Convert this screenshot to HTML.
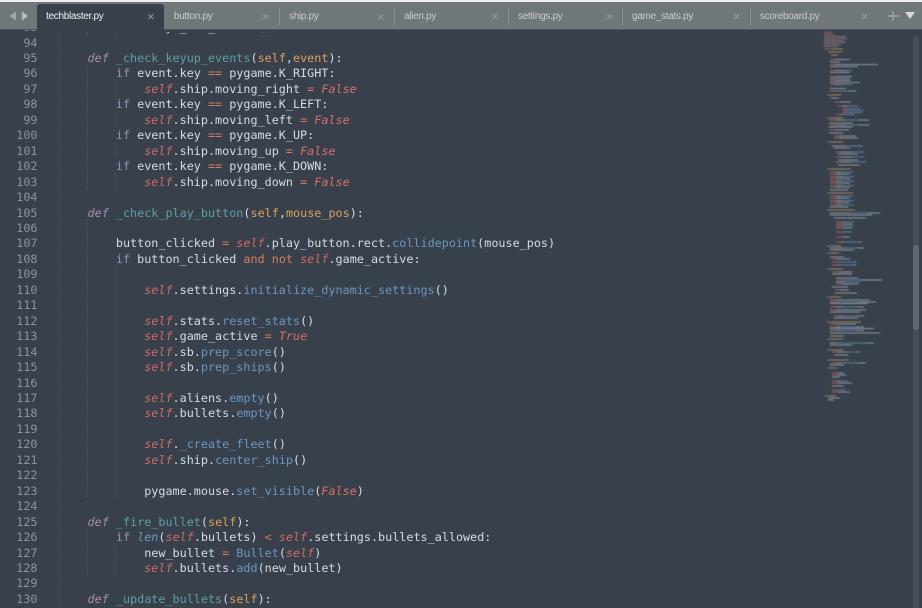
<!DOCTYPE html>
<html>
<head>
<meta charset="utf-8">
<style>
html,body{margin:0;padding:0;background:#38414b}
#app{position:relative;width:922px;height:608px;overflow:hidden;background:#38414b;font-family:"Liberation Mono",monospace}
#topw{position:absolute;left:0;top:0;width:922px;height:2px;background:#f0f0f0;z-index:6}
#bar{position:absolute;left:0;top:2px;width:922px;height:27px;background:#6f7779;z-index:4;border-bottom:1px solid #4b535b;box-sizing:content-box}
#mask{position:absolute;left:40px;top:30px;width:760px;height:1.6px;background:#38414b;z-index:3}
#active{position:absolute;left:37px;top:4px;width:127px;height:27px;background:#38414b;border-radius:3px 3px 0 0;z-index:5}
.t{position:absolute;top:10px;font:10px/14px "Liberation Sans",sans-serif;letter-spacing:-.3px;color:#c9cdd0;z-index:6;white-space:pre}
.x{position:absolute;top:10px;font:13px/14px "Liberation Sans",sans-serif;color:#969c9f;z-index:6}
.s{position:absolute;top:8px;width:1px;height:17px;background:#8b9294;z-index:6}
#gut,#code{position:absolute;top:20.1px;font-size:11.77px;line-height:15.457px;white-space:pre;margin:0}
#gut{left:0;width:37.5px;text-align:right;color:#8c949b}
#code{left:59.2px;color:#d5dbe2}
.k{color:#9a90b8}.d{color:#a98cb5;font-style:italic}.f{color:#5f9ea6}.p{color:#d9a05c}
.e{color:#cf6a66;font-style:italic}.o{color:#d97c5c}.b{color:#6a97bf}.c{color:#6a97bf;font-style:italic}.v{color:#d96f66;font-style:italic}
svg{position:absolute;left:0;top:0}
#track{position:absolute;left:913px;top:35px;width:6px;height:573px;background:#454d58;border-radius:3px 3px 0 0}
#thumb{position:absolute;left:913px;top:245px;width:6px;height:85px;background:#5f6873;border-radius:3px}
</style>
</head>
<body>
<div id="app">
<svg width="922" height="608" fill="none">
<defs><filter id="bl" x="-5%" y="-5%" width="110%" height="110%"><feGaussianBlur stdDeviation=".4"/></filter></defs>
<g stroke="#59616b" stroke-width="1" stroke-dasharray="1 2">
<path d="M59.5 29V608"/>
<path d="M87.5 29V36M87.5 65.8V189.4M87.5 220.3V498.6M87.5 529.5V575.9"/>
<path d="M115.5 29V36M115.5 81.2V96.7M115.5 112.1V127.6M115.5 143V158.5M115.5 173.9V189.4M115.5 266.7V498.6M115.5 545V575.9"/>
</g>
<g stroke-width="1" filter="url(#bl)" opacity=".72">
<path stroke="#aeb5bc" d="M830 59.5h20M830 62h10M830 64.5h48M830 66.5h28M830 70.5h22M830 72.5h20M830 76.5h22M830 78.5h20M830 80.5h20M830 82.5h30M830 84.5h22M830 88.5h16M830 91h26M831 98h8M835 102h16M838 106h20M842 108.5h18M842 110.5h22M842 112.5h20M836 114.5h18M829 120h40M829 123h24M829 125h40M829 127h24M829 130h20M829 133h14M834 136h22M834 138h24M832 146h30M834 148h16M836 152h28M838 154h20M836 157h28M838 160h20M836 162h30M838 165h22M830 172h24M830 174h20M830 176.5h24M830 178.5h20M830 181h24M830 183h20M830 185.5h24M830 187.5h20M830 190h18M830 196h24M830 198h20M830 200.5h24M830 202.5h20M830 205h24M830 207h18M830 213h50M830 215h42M834 218h32M836 222h18M836 224h16M836 226h18M836 228h16M836 232h16M836 237h14M836 242h26M830 248h34M830 250h24M830 257h14M832 259h18M832 262h24M832 265h24M832 272h20M832 274h20M836 278h22M836 280h46M836 282h24M836 284h22M832 287h16M835 290h14M835 293h22M830 300h40M830 302h46M830 303.5h38M830 307h34M830 310h36M830 312h30M834 316h30M834 318h24M830 324h26M830 327h34M830 328.5h44M830 330.5h34M830 333h50M830 336h14M830 343h44M830 345h22M832 352h28M834 355h14M830 363h36M830 365h14M832 373h12M832 375h14M832 377h8M832 381h16M832 383h20M832 386h12M832 390h14M832 392h18M828 398h12M828 400h6"/>
<path stroke="#6a96bf" d="M846 70.5h6M842 84.5h10M836 91h12M848 106h10M846 108.5h14M846 110.5h18M846 112.5h16M842 114.5h10M846 120h12M846 125h12M846 146h14M852 152h12M852 157h12M852 162h14M842 172h12M842 176.5h12M842 181h12M842 185.5h12M842 196h12M842 200.5h12M842 205h12M850 213h18M844 222h10M844 226h10M844 232h8M842 242h18M844 248h14M840 262h14M840 265h14M842 280h16M846 282h14M838 302h20M842 307h16M842 316h16M840 327h16M840 330.5h16M838 343h28M846 352h12M842 363h16M840 381h8M838 390h8"/>
<path stroke="#c96a68" d="M824 32.5h8M824 34.5h10M830 59.5h5M830 64.5h5M830 70.5h5M830 76.5h5M830 80.5h5M830 84.5h5M830 91h5M835 102h5M838 106h5M842 108.5h4M842 110.5h4M842 112.5h4M836 114.5h5M829 120h6M829 125h6M829 130h6M834 136h5M834 138h5M836 152h5M836 157h5M836 162h5M830 172h6M830 174h6M830 176.5h6M830 178.5h6M830 181h6M830 183h6M830 185.5h6M830 187.5h6M830 196h6M830 198h6M830 200.5h6M830 202.5h6M830 205h6M836 222h7M836 224h7M836 226h7M836 228h7M836 232h7M836 237h7M836 242h5M832 259h5M832 262h7M832 265h7M832 272h6M836 280h6M836 284h6M835 290h5M830 300h6M830 302h6M830 307h6M830 310h6M834 316h5M830 324h6M830 327h6M830 330.5h6M832 352h6M830 363h6M832 373h6M832 375h6M832 381h6M832 383h6M832 390h6M832 392h6"/>
<path stroke="#a9828f" d="M824 36.5h22M824 38.5h24M824 40.5h20M824 42.5h22M824 44.5h17M824 46.5h14M824 49h8M827 95h5M827 118h5M827 142h5M827 169h5M827 193h5M827 210h5M827 246h5M827 253h5M827 269h5M827 297h5M827 322h5M827 339h5M827 350h5M827 360h5M827 368h5M824 396h6"/>
<path stroke="#c9a35f" d="M832 49h11M828 52h14M831 55h7M832 95h9M832 118h11M832 142h11M832 169h19M832 193h21M832 210h23M832 246h9M832 253h7M832 269h11M832 297h9M832 322h29M832 339h11M832 350h11M832 360h17M832 368h5M830 396h6"/>
</g>
</svg>
<div id="track"></div>
<div id="thumb"></div>
<pre id="gut">93
94
95
96
97
98
99
100
101
102
103
104
105
106
107
108
109
110
111
112
113
114
115
116
117
118
119
120
121
122
123
124
125
126
127
128
129
130</pre>
<pre id="code">        <span class="e">self</span>.skya_bit_ofscrn()

    <span class="d">def</span> <span class="f">_check_keyup_events</span>(<span class="p">self</span>,<span class="p">event</span>):
        <span class="k">if</span> event.key <span class="o">==</span> pygame.K_RIGHT:
            <span class="e">self</span>.ship.moving_right <span class="o">=</span> <span class="v">False</span>
        <span class="k">if</span> event.key <span class="o">==</span> pygame.K_LEFT:
            <span class="e">self</span>.ship.moving_left <span class="o">=</span> <span class="v">False</span>
        <span class="k">if</span> event.key <span class="o">==</span> pygame.K_UP:
            <span class="e">self</span>.ship.moving_up <span class="o">=</span> <span class="v">False</span>
        <span class="k">if</span> event.key <span class="o">==</span> pygame.K_DOWN:
            <span class="e">self</span>.ship.moving_down <span class="o">=</span> <span class="v">False</span>

    <span class="d">def</span> <span class="f">_check_play_button</span>(<span class="p">self</span>,<span class="p">mouse_pos</span>):

        button_clicked <span class="o">=</span> <span class="e">self</span>.play_button.rect.<span class="b">collidepoint</span>(mouse_pos)
        <span class="k">if</span> button_clicked <span class="o">and</span> <span class="o">not</span> <span class="e">self</span>.game_active:

            <span class="e">self</span>.settings.<span class="b">initialize_dynamic_settings</span>()

            <span class="e">self</span>.stats.<span class="b">reset_stats</span>()
            <span class="e">self</span>.game_active <span class="o">=</span> <span class="v">True</span>
            <span class="e">self</span>.sb.<span class="b">prep_score</span>()
            <span class="e">self</span>.sb.<span class="b">prep_ships</span>()

            <span class="e">self</span>.aliens.<span class="b">empty</span>()
            <span class="e">self</span>.bullets.<span class="b">empty</span>()

            <span class="e">self</span>.<span class="b">_create_fleet</span>()
            <span class="e">self</span>.ship.<span class="b">center_ship</span>()

            pygame.mouse.<span class="b">set_visible</span>(<span class="v">False</span>)

    <span class="d">def</span> <span class="f">_fire_bullet</span>(<span class="p">self</span>):
        <span class="k">if</span> <span class="c">len</span>(<span class="e">self</span>.bullets) <span class="o">&lt;</span> <span class="e">self</span>.settings.bullets_allowed:
            new_bullet <span class="o">=</span> <span class="b">Bullet</span>(<span class="e">self</span>)
            <span class="e">self</span>.bullets.<span class="b">add</span>(new_bullet)

    <span class="d">def</span> <span class="f">_update_bullets</span>(<span class="p">self</span>):</pre>
<div id="mask"></div>
<div id="topw"></div>
<div id="bar"></div>
<div id="active"></div>
<svg width="922" height="40" style="z-index:6">
<path d="M16 11.5L9.5 16L16 20.5Z" fill="#a3a9ab"/>
<path d="M22 11.5L28 16L22 20.5Z" fill="#b9bec0"/>
<path d="M893 11V21M888 16H899" stroke="#a0a6a8" stroke-width="1.4"/>
<path d="M905 12H915L910 19Z" fill="#d4d8da"/>
</svg>
<span class="t" style="left:46px;color:#eef0f2">techblaster.py</span><span class="x" style="left:147px">×</span>
<span class="t" style="left:174px">button.py</span><span class="x" style="left:262px">×</span><span class="s" style="left:279px"></span>
<span class="t" style="left:289px">ship.py</span><span class="x" style="left:377px">×</span><span class="s" style="left:394px"></span>
<span class="t" style="left:404px">alien.py</span><span class="x" style="left:491px">×</span><span class="s" style="left:508px"></span>
<span class="t" style="left:518px">settings.py</span><span class="x" style="left:606px">×</span><span class="s" style="left:622px"></span>
<span class="t" style="left:632px">game_stats.py</span><span class="x" style="left:733px">×</span><span class="s" style="left:750px"></span>
<span class="t" style="left:760px">scoreboard.py</span><span class="x" style="left:861px">×</span>
</div>
</body>
</html>
